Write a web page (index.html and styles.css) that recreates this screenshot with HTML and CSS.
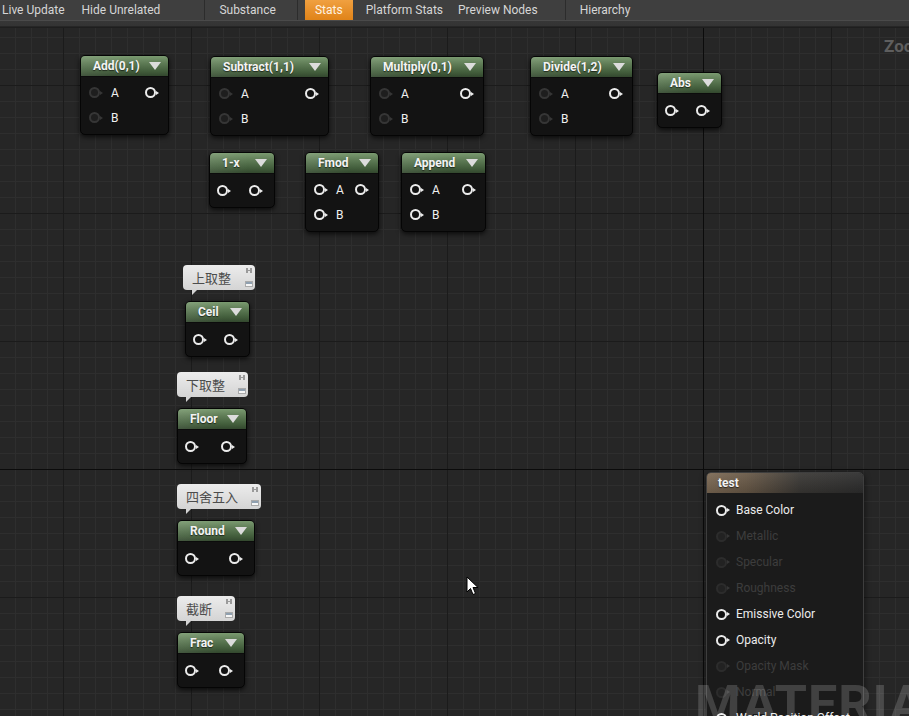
FILE: index.html
```html
<!DOCTYPE html>
<html>
<head>
<meta charset="utf-8">
<link rel="stylesheet" href="styles.css">
</head>
<body>
<div class="app">
  <div class="toolbar">
    <span class="tb i-live">Live Update</span>
    <span class="tb i-hide">Hide Unrelated</span>
    <span class="sep s1"></span>
    <span class="tb i-sub">Substance</span>
    <span class="sep s2"></span>
    <span class="tb stats">Stats</span>
    <span class="tb i-plat">Platform Stats</span>
    <span class="tb i-prev">Preview Nodes</span>
    <span class="sep s3"></span>
    <span class="tb i-hier">Hierarchy</span>
  </div>
  <div class="strip"></div>
  <div class="graph">
    <div class="zoom">Zoom 1:1</div>

    <div class="node n-add">
      <div class="hdr"><span class="title">Add(0,1)</span><span class="tri"></span></div>
      <div class="body">
        <div class="row"><span class="pin dim"></span><span class="lbl">A</span><span class="pin out"></span></div>
        <div class="row"><span class="pin dim"></span><span class="lbl">B</span></div>
      </div>
    </div>
    <div class="node n-sub">
      <div class="hdr"><span class="title">Subtract(1,1)</span><span class="tri"></span></div>
      <div class="body">
        <div class="row"><span class="pin dim"></span><span class="lbl">A</span><span class="pin out"></span></div>
        <div class="row"><span class="pin dim"></span><span class="lbl">B</span></div>
      </div>
    </div>
    <div class="node n-mul">
      <div class="hdr"><span class="title">Multiply(0,1)</span><span class="tri"></span></div>
      <div class="body">
        <div class="row"><span class="pin dim"></span><span class="lbl">A</span><span class="pin out"></span></div>
        <div class="row"><span class="pin dim"></span><span class="lbl">B</span></div>
      </div>
    </div>
    <div class="node n-div">
      <div class="hdr"><span class="title">Divide(1,2)</span><span class="tri"></span></div>
      <div class="body">
        <div class="row"><span class="pin dim"></span><span class="lbl">A</span><span class="pin out"></span></div>
        <div class="row"><span class="pin dim"></span><span class="lbl">B</span></div>
      </div>
    </div>
    <div class="node n-abs">
      <div class="hdr"><span class="title">Abs</span><span class="tri"></span></div>
      <div class="body one">
        <div class="row"><span class="pin"></span><span class="pin out"></span></div>
      </div>
    </div>
    <div class="node n-1x">
      <div class="hdr"><span class="title">1-x</span><span class="tri"></span></div>
      <div class="body one">
        <div class="row"><span class="pin"></span><span class="pin out"></span></div>
      </div>
    </div>
    <div class="node n-fmod">
      <div class="hdr"><span class="title">Fmod</span><span class="tri"></span></div>
      <div class="body">
        <div class="row"><span class="pin"></span><span class="lbl">A</span><span class="pin out"></span></div>
        <div class="row"><span class="pin"></span><span class="lbl">B</span></div>
      </div>
    </div>
    <div class="node n-app">
      <div class="hdr"><span class="title">Append</span><span class="tri"></span></div>
      <div class="body">
        <div class="row"><span class="pin"></span><span class="lbl">A</span><span class="pin out"></span></div>
        <div class="row"><span class="pin"></span><span class="lbl">B</span></div>
      </div>
    </div>

    <div class="cmt c-ceil">上取整<span class="ci"><span class="ci-pin"></span><span class="ci-box"></span></span></div>
    <div class="node n-ceil">
      <div class="hdr"><span class="title">Ceil</span><span class="tri"></span></div>
      <div class="body one">
        <div class="row"><span class="pin"></span><span class="pin out"></span></div>
      </div>
    </div>
    <div class="cmt c-floor">下取整<span class="ci"><span class="ci-pin"></span><span class="ci-box"></span></span></div>
    <div class="node n-floor">
      <div class="hdr"><span class="title">Floor</span><span class="tri"></span></div>
      <div class="body one">
        <div class="row"><span class="pin"></span><span class="pin out"></span></div>
      </div>
    </div>
    <div class="cmt c-round">四舍五入<span class="ci"><span class="ci-pin"></span><span class="ci-box"></span></span></div>
    <div class="node n-round">
      <div class="hdr"><span class="title">Round</span><span class="tri"></span></div>
      <div class="body one">
        <div class="row"><span class="pin"></span><span class="pin out"></span></div>
      </div>
    </div>
    <div class="cmt c-frac">截断<span class="ci"><span class="ci-pin"></span><span class="ci-box"></span></span></div>
    <div class="node n-frac">
      <div class="hdr"><span class="title">Frac</span><span class="tri"></span></div>
      <div class="body one">
        <div class="row"><span class="pin"></span><span class="pin out"></span></div>
      </div>
    </div>

    <div class="watermark">MATERIAL</div>

    <div class="mat">
      <div class="mhdr">test</div>
      <div class="mbody">
        <div class="mrow"><span class="pin"></span><span>Base Color</span></div>
        <div class="mrow off"><span class="pin dim"></span><span>Metallic</span></div>
        <div class="mrow off"><span class="pin dim"></span><span>Specular</span></div>
        <div class="mrow off"><span class="pin dim"></span><span>Roughness</span></div>
        <div class="mrow"><span class="pin"></span><span>Emissive Color</span></div>
        <div class="mrow"><span class="pin"></span><span>Opacity</span></div>
        <div class="mrow off"><span class="pin dim"></span><span>Opacity Mask</span></div>
        <div class="mrow off"><span class="pin dim"></span><span>Normal</span></div>
        <div class="mrow"><span class="pin"></span><span>World Position Offset</span></div>
      </div>
    </div>

    <svg class="cursor" width="13" height="20" viewBox="0 0 13 20">
      <path d="M1 1 L1 16 L4.5 12.5 L7 18.5 L9.5 17.5 L7 11.5 L12 11.5 Z" fill="#fff" stroke="#000" stroke-width="1"/>
    </svg>
  </div>
</div>
</body>
</html>
```

FILE: styles.css
```css
html, body {
  margin: 0;
  padding: 0;
  background: #262626;
  overflow: hidden;
}
.app {
  width: 909px;
  height: 716px;
  overflow: hidden;
  font-family: Roboto, "Noto Sans", sans-serif;
}
.toolbar {
  height: 20px;
  background: #3f3f3f;
  display: flex;
  align-items: stretch;
  font-size: 12px;
  color: #d6d6d6;
  position: relative;
}
.tb {
  display: flex;
  align-items: center;
  white-space: nowrap;
}
.i-live { margin-left: 2px; }
.i-hide { margin-left: 17px; }
.sep { width: 1px; background: #2c2c2c; }
.s1 { margin-left: 44px; }
.i-sub { margin-left: 14px; }
.s2 { margin-left: 21px; }
.stats {
  margin-left: 7px;
  width: 48px;
  justify-content: center;
  background: linear-gradient(#f0a040, #e08318);
  color: #fff3e0;
}
.i-plat { margin-left: 13px; }
.i-prev { margin-left: 15px; }
.s3 { margin-left: 27px; }
.i-hier { margin-left: 14px; }
.strip {
  height: 8px;
  background: linear-gradient(#4a4a4a 0, #4a4a4a 1px, #363636 1px, #343434 6px, #262626 6px, #262626 7px, #1e1e1e 7px);
}
.graph {
  position: relative;
  height: 688px;
  background-color: #262626;
  background-image:
    linear-gradient(90deg, transparent 703px, #0b0b0b 703px, #0b0b0b 704px, transparent 704px),
    linear-gradient(transparent 441px, #0b0b0b 441px, #0b0b0b 442px, transparent 442px),
    linear-gradient(90deg, #1b1b1b 1px, transparent 1px),
    linear-gradient(#1b1b1b 1px, transparent 1px),
    linear-gradient(90deg, #2e2e2e 1px, transparent 1px),
    linear-gradient(#2e2e2e 1px, transparent 1px);
  background-repeat: no-repeat, no-repeat, repeat, repeat, repeat, repeat;
  background-size: 100% 100%, 100% 100%, 128px 128px, 128px 128px, 16px 16px, 16px 16px;
  background-position: 0 0, 0 0, 63px 57px, 63px 57px, 15px 9px, 15px 9px;
}
.zoom {
  position: absolute;
  left: 884px;
  top: 8px;
  font: bold 17px Roboto, sans-serif;
  color: #5e5e5e;
  white-space: nowrap;
}

/* nodes */
.node {
  position: absolute;
  background: #131313;
  border: 1px solid #050505;
  border-radius: 5px;
  box-shadow: 0 2px 5px rgba(0,0,0,0.7);
}
.hdr {
  height: 20px;
  border-radius: 4px 4px 0 0;
  background:
    linear-gradient(90deg, rgba(255,255,255,0.08), rgba(255,255,255,0) 60%),
    linear-gradient(#7a9a70 0, #5f7c56 35%, #435e3c 75%, #33482e 100%);
  display: flex;
  align-items: center;
  padding: 0 7px 0 12px;
  color: #f4f4f4;
  font: bold 12px Roboto, sans-serif;
  text-shadow: 0 1px 1px rgba(0,0,0,0.6);
  white-space: nowrap;
}
.title { flex: 1; }
.tri {
  width: 0;
  height: 0;
  border-left: 6px solid transparent;
  border-right: 6px solid transparent;
  border-top: 8px solid #dcdcdc;
}
.body {
  padding: 3px 9px 4px 8px;
  border-top: 1px solid #0c0c0c;
}
.body.one { padding: 4px 11px 4px 7px; }
.row {
  height: 25px;
  display: flex;
  align-items: center;
  font: 12px Roboto, sans-serif;
  color: #f0f0f0;
}
.lbl { margin-left: 8px; }
.pin {
  position: relative;
  width: 11px;
  height: 11px;
  box-sizing: border-box;
  border: 2px solid #ececec;
  border-radius: 50%;
  background: #111;
  flex: none;
  margin-right: 3px;
}
.pin::after {
  content: "";
  position: absolute;
  right: -5px;
  top: 1.5px;
  border-left: 3px solid #ececec;
  border-top: 2.5px solid transparent;
  border-bottom: 2.5px solid transparent;
}
.pin.dim {
  border-color: #363636;
  background: #1e1e1e;
}
.pin.dim::after { border-left-color: #363636; }
.pin.out { margin-left: auto; }

.n-add { left: 80px; top: 27px; width: 87px; }
.n-sub { left: 210px; top: 28px; width: 117px; }
.n-mul { left: 370px; top: 28px; width: 112px; }
.n-div { left: 530px; top: 28px; width: 101px; }
.n-abs { left: 657px; top: 44px; width: 63px; }
.n-1x { left: 209px; top: 124px; width: 64px; }
.n-fmod { left: 305px; top: 124px; width: 72px; }
.n-app { left: 401px; top: 124px; width: 83px; }
.n-ceil { left: 185px; top: 273px; width: 63px; }
.n-floor { left: 177px; top: 380px; width: 68px; }
.n-round { left: 177px; top: 492px; width: 76px; }
.n-frac { left: 177px; top: 604px; width: 66px; }

/* comment bubbles */
.cmt {
  position: absolute;
  height: 25px;
  box-sizing: border-box;
  padding: 0 0 0 9px;
  border-radius: 4px;
  background: linear-gradient(#ececec, #d4d4d4);
  color: #4c4c4c;
  font: 13px "Noto Sans CJK SC", sans-serif;
  line-height: 25px;
  white-space: nowrap;
}
.cmt::after {
  content: "";
  position: absolute;
  left: 9px;
  bottom: -5px;
  border-top: 5px solid #d4d4d4;
  border-right: 5px solid transparent;
}
.ci {
  position: absolute;
  right: 2px;
  top: 3px;
  width: 8px;
  height: 19px;
  display: flex;
  flex-direction: column;
  justify-content: space-between;
  align-items: center;
}
.ci-pin {
  width: 6px;
  height: 5px;
  border-left: 2px solid #9a9a9a;
  border-right: 2px solid #9a9a9a;
  box-sizing: border-box;
  background: linear-gradient(transparent 2px, #9a9a9a 2px, #9a9a9a 3px, transparent 3px);
}
.ci-box {
  width: 8px;
  height: 6px;
  background: linear-gradient(#8fa0b0 0, #8fa0b0 2px, #f6f6f6 2px);
  border: 1px solid #aaa;
  box-sizing: border-box;
}
.c-ceil { left: 183px; top: 237px; width: 72px; }
.c-floor { left: 177px; top: 344px; width: 71px; }
.c-round { left: 177px; top: 456px; width: 84px; }
.c-frac { left: 177px; top: 568px; width: 58px; }

/* material node */
.mat {
  position: absolute;
  left: 706px;
  top: 444px;
  width: 158px;
  height: 300px;
  background: #1b1b1b;
  border: 1px solid #3e3e3e;
  border-radius: 5px;
  box-shadow: 0 2px 6px rgba(0,0,0,0.6);
  box-sizing: border-box;
}
.mhdr {
  height: 20px;
  border-radius: 4px 4px 0 0;
  background:
    linear-gradient(rgba(255,255,255,0.06), rgba(0,0,0,0.15)),
    linear-gradient(90deg, #7d6a55 0, #6a5a48 25%, #3a3835 60%, #2e2e2e 100%);
  color: #f2f2f2;
  font: bold 12px Roboto, sans-serif;
  line-height: 20px;
  padding-left: 11px;
  text-shadow: 0 1px 1px rgba(0,0,0,0.6);
}
.mbody { padding: 4px 0 0 9px; }
.mrow {
  height: 26px;
  display: flex;
  align-items: center;
  font: 12px Roboto, sans-serif;
  color: #ececec;
  white-space: nowrap;
}
.mrow .pin { margin-right: 9px; }
.mrow.off { color: #3d3d3d; }
.mrow.off .pin { border-color: #2c2c2c; background: #222; }

.watermark {
  position: absolute;
  left: 695px;
  top: 646px;
  font: bold 52px Roboto, sans-serif;
  color: rgba(255,255,255,0.17);
  letter-spacing: 1px;
  white-space: nowrap;
  z-index: 2;
}
.cursor {
  position: absolute;
  left: 466px;
  top: 548px;
}
```
